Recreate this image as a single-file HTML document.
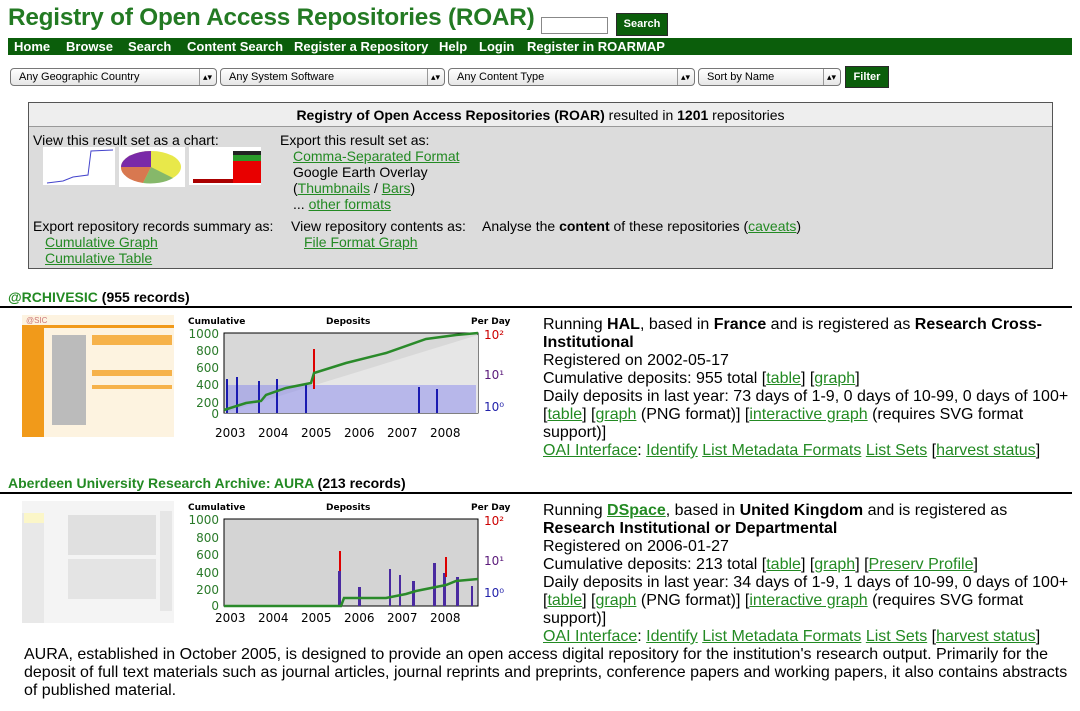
<!DOCTYPE html>
<html><head><meta charset="utf-8"><style>
body{margin:0;width:1080px;height:711px;overflow:hidden;background:#fff;font-family:"Liberation Sans",Arial,sans-serif;color:#000;position:relative}
a{color:#238a23;text-decoration:underline}
.abs{position:absolute}
h1{position:absolute;left:8px;top:4px;margin:0;font-size:24.3px;font-weight:bold;color:#237a23;letter-spacing:-0.2px;white-space:nowrap}
.nav{position:absolute;left:8px;top:38px;width:1064px;height:17px;background:#0b5e0b}
.nav span{color:#fff;font-weight:bold;font-size:13px;position:absolute;top:0;line-height:17px}
.sel{position:absolute;top:68px;height:16px;border:1px solid #777;border-radius:4px;background:linear-gradient(#fff,#e6e6e6);font-size:11px;line-height:16px;padding-left:8px;box-sizing:content-box}
.sel i{position:absolute;right:4px;top:0;font-style:normal;font-size:9px;border-left:1px solid #999;padding-left:3px}
.btn{position:absolute;background:#0b5e0b;color:#fff;font-weight:bold;font-size:11px;text-align:center;border:1px solid #2a2a2a}
.box{position:absolute;left:28px;top:102px;width:1023px;height:165px;border:1px solid #555;background:#dcdcdc;font-size:14px}
.box .hd{height:23px;background:#eeeeee;border-bottom:1px solid #999;text-align:center;line-height:24px}
.t{position:absolute;font-size:14px;line-height:16px;white-space:nowrap}
.rh{position:absolute;left:8px;font-size:14px;font-weight:bold;white-space:nowrap}
.rh a{color:#238a23;text-decoration:none}
.rule{position:absolute;left:0;width:1072px;height:2px;background:#000}
.info{position:absolute;left:543px;font-size:16px;line-height:18px;white-space:nowrap}
</style></head><body>
<h1>Registry of Open Access Repositories (ROAR)</h1>
<div class="abs" style="left:541px;top:17px;width:65px;height:15px;border:1px solid #888;background:#fff"></div>
<div class="btn" style="left:616px;top:13px;width:50px;height:21px;line-height:21px">Search</div>
<div class="nav">
<span style="left:6px">Home</span><span style="left:58px">Browse</span><span style="left:120px">Search</span><span style="left:179px">Content Search</span><span style="left:286px">Register a Repository</span><span style="left:431px">Help</span><span style="left:471px">Login</span><span style="left:519px">Register in ROARMAP</span>
</div>
<div class="sel" style="left:10px;width:197px">Any Geographic Country<i>▴▾</i></div>
<div class="sel" style="left:220px;width:215px">Any System Software<i>▴▾</i></div>
<div class="sel" style="left:448px;width:237px">Any Content Type<i>▴▾</i></div>
<div class="sel" style="left:698px;width:133px">Sort by Name<i>▴▾</i></div>
<div class="btn" style="left:845px;top:66px;width:42px;height:20px;line-height:20px">Filter</div>

<div class="box">
<div class="hd"><b>Registry of Open Access Repositories (ROAR)</b> resulted in <b>1201</b> repositories</div>
<div class="t" style="left:4px;top:29px">View this result set as a chart:</div>
<svg class="abs" style="left:14px;top:44px" width="220" height="40">
<rect x="0" y="0" width="72" height="38" fill="#fff"/><polyline points="4,36 20,34 30,30 45,28 48,4 70,3" fill="none" stroke="#4444cc" stroke-width="1"/>
<rect x="76" y="0" width="66" height="40" fill="#fff"/><ellipse cx="108" cy="20" rx="30" ry="16" fill="#e8e84a"/><path d="M108 20 L78 20 A30 16 0 0 1 108 4Z" fill="#7a2aa8"/><path d="M108 20 L78 20 A30 16 0 0 0 100 36Z" fill="#d87850"/><path d="M108 20 L100 36 A30 16 0 0 0 130 31Z" fill="#86b86a"/>
<rect x="146" y="0" width="72" height="38" fill="#fff"/><rect x="190" y="14" width="28" height="22" fill="#e80000"/><rect x="190" y="8" width="28" height="6" fill="#2a9a2a"/><rect x="190" y="4" width="28" height="4" fill="#222"/><rect x="150" y="32" width="40" height="4" fill="#a00"/>
</svg>
<div class="t" style="left:251px;top:29px">Export this result set as:</div>
<div class="t" style="left:264px;top:45px"><a>Comma-Separated Format</a></div>
<div class="t" style="left:264px;top:61px">Google Earth Overlay</div>
<div class="t" style="left:264px;top:77px">(<a>Thumbnails</a> / <a>Bars</a>)</div>
<div class="t" style="left:264px;top:93px">... <a>other formats</a></div>
<div class="t" style="left:4px;top:115px">Export repository records summary as:</div>
<div class="t" style="left:16px;top:131px"><a>Cumulative Graph</a></div>
<div class="t" style="left:16px;top:147px"><a>Cumulative Table</a></div>
<div class="t" style="left:262px;top:115px">View repository contents as:</div>
<div class="t" style="left:275px;top:131px"><a>File Format Graph</a></div>
<div class="t" style="left:453px;top:115px">Analyse the <b>content</b> of these repositories (<a>caveats</a>)</div>
</div>

<div class="rh" style="top:289px"><a>@RCHIVESIC</a> (955 records)</div>
<div class="rule" style="top:306px"></div>
<svg class="abs" style="left:22px;top:315px" width="152" height="122">
<rect width="152" height="122" fill="#fdf3e0"/><rect x="0" y="10" width="22" height="112" fill="#f19a1a"/><rect x="0" y="10" width="152" height="3" fill="#f19a1a"/>
<rect x="70" y="20" width="80" height="10" fill="#f6b24a"/><rect x="70" y="55" width="80" height="6" fill="#f6b24a"/><rect x="70" y="70" width="80" height="4" fill="#f6b24a"/>
<g fill="#bbb"><rect x="30" y="20" width="34" height="90"/></g><text x="4" y="8" font-size="8" fill="#c77">@SIC</text>
</svg>
<svg class="abs" style="left:186px;top:315px" width="325" height="126" font-family="DejaVu Sans,sans-serif">
<text x="2" y="9" font-size="9" font-weight="bold">Cumulative</text><text x="140" y="9" font-size="9" font-weight="bold">Deposits</text><text x="285" y="9" font-size="9" font-weight="bold">Per Day</text>
<rect x="38" y="18" width="254" height="80" fill="#d8d8d8" stroke="#000"/>
<polygon points="38,98 292,20 292,98" fill="#e6e6e6"/>
<g fill="#8888ee"><rect x="40" y="70" width="250" height="28" opacity="0.5"/></g>
<g fill="#1a1ab0"><rect x="40" y="64" width="2" height="34"/><rect x="50" y="62" width="2" height="36"/><rect x="72" y="66" width="2" height="32"/><rect x="90" y="64" width="2" height="34"/><rect x="119" y="68" width="2" height="30"/><rect x="232" y="72" width="2" height="26"/><rect x="250" y="74" width="2" height="24"/></g>
<rect x="127" y="34" width="2" height="40" fill="#d00"/>
<polyline points="38,95 60,88 75,86 80,80 100,73 125,68 128,58 160,48 200,38 240,24 270,20 292,18" fill="none" stroke="#2a8a2a" stroke-width="2.5"/>
<g font-size="12" fill="#2a7a2a" text-anchor="end"><text x="33" y="23">1000</text><text x="33" y="40">800</text><text x="33" y="57">600</text><text x="33" y="74">400</text><text x="33" y="92">200</text><text x="33" y="103">0</text></g>
<text x="298" y="24" font-size="12" fill="#c00">10²</text><text x="298" y="64" font-size="12" fill="#5a1a7a">10¹</text><text x="298" y="96" font-size="12" fill="#22a">10⁰</text>
<g font-size="12"><text x="29" y="122">2003</text><text x="72" y="122">2004</text><text x="115" y="122">2005</text><text x="158" y="122">2006</text><text x="201" y="122">2007</text><text x="244" y="122">2008</text></g>
</svg>
<div class="info" style="top:316px">Running <b>HAL</b>, based in <b>France</b> and is registered as <b>Research Cross-</b><br><b>Institutional</b><br>Registered on 2002-05-17<br>Cumulative deposits: 955 total [<a>table</a>] [<a>graph</a>]<br>Daily deposits in last year: 73 days of 1-9, 0 days of 10-99, 0 days of 100+<br>[<a>table</a>] [<a>graph</a> (PNG format)] [<a>interactive graph</a> (requires SVG format<br>support)]<br><a>OAI Interface</a>: <a>Identify</a> <a>List Metadata Formats</a> <a>List Sets</a> [<a>harvest status</a>]</div>

<div class="rh" style="top:475px"><a>Aberdeen University Research Archive: AURA</a> (213 records)</div>
<div class="rule" style="top:492px"></div>
<svg class="abs" style="left:22px;top:501px" width="152" height="122">
<rect width="152" height="122" fill="#f4f4f4"/><rect x="0" y="12" width="22" height="110" fill="#e8e8e8"/><rect x="46" y="14" width="88" height="40" fill="#e0e0e0"/><rect x="46" y="58" width="88" height="40" fill="#e4e4e4"/><rect x="138" y="10" width="12" height="100" fill="#e6e6e6"/><rect x="2" y="12" width="20" height="10" fill="#fbf6c8"/>
</svg>
<svg class="abs" style="left:186px;top:501px" width="325" height="126" font-family="DejaVu Sans,sans-serif">
<text x="2" y="9" font-size="9" font-weight="bold">Cumulative</text><text x="140" y="9" font-size="9" font-weight="bold">Deposits</text><text x="285" y="9" font-size="9" font-weight="bold">Per Day</text>
<rect x="38" y="18" width="254" height="87" fill="#d4d4d4" stroke="#000"/>
<g fill="#4a2aa0"><rect x="152" y="70" width="3" height="35"/><rect x="172" y="86" width="3" height="19"/><rect x="203" y="68" width="2" height="37"/><rect x="213" y="74" width="2" height="31"/><rect x="226" y="80" width="3" height="25"/><rect x="247" y="62" width="3" height="43"/><rect x="257" y="72" width="3" height="33"/><rect x="270" y="76" width="3" height="29"/><rect x="285" y="85" width="2" height="20"/></g>
<rect x="153" y="50" width="2" height="20" fill="#d00"/><rect x="259" y="56" width="2" height="20" fill="#d00"/>
<polyline points="38,105 155,105 158,97 200,97 220,93 230,90 260,84 270,80 292,78" fill="none" stroke="#2a8a2a" stroke-width="2.5"/>
<g font-size="12" fill="#2a7a2a" text-anchor="end"><text x="33" y="23">1000</text><text x="33" y="41">800</text><text x="33" y="58">600</text><text x="33" y="76">400</text><text x="33" y="93">200</text><text x="33" y="109">0</text></g>
<text x="298" y="24" font-size="12" fill="#c00">10²</text><text x="298" y="64" font-size="12" fill="#5a1a7a">10¹</text><text x="298" y="96" font-size="12" fill="#22a">10⁰</text>
<g font-size="12"><text x="29" y="121">2003</text><text x="72" y="121">2004</text><text x="115" y="121">2005</text><text x="158" y="121">2006</text><text x="201" y="121">2007</text><text x="244" y="121">2008</text></g>
</svg>
<div class="info" style="top:502px">Running <a><b>DSpace</b></a>, based in <b>United Kingdom</b> and is registered as<br><b>Research Institutional or Departmental</b><br>Registered on 2006-01-27<br>Cumulative deposits: 213 total [<a>table</a>] [<a>graph</a>] [<a>Preserv Profile</a>]<br>Daily deposits in last year: 34 days of 1-9, 1 days of 10-99, 0 days of 100+<br>[<a>table</a>] [<a>graph</a> (PNG format)] [<a>interactive graph</a> (requires SVG format<br>support)]<br><a>OAI Interface</a>: <a>Identify</a> <a>List Metadata Formats</a> <a>List Sets</a> [<a>harvest status</a>]</div>
<div class="abs" style="left:24px;top:646px;font-size:16px;line-height:18px;width:1045px">AURA, established in October 2005, is designed to provide an open access digital repository for the institution's research output. Primarily for the<br>deposit of full text materials such as journal articles, journal reprints and preprints, conference papers and working papers, it also contains abstracts<br>of published material.</div>
</body></html>
